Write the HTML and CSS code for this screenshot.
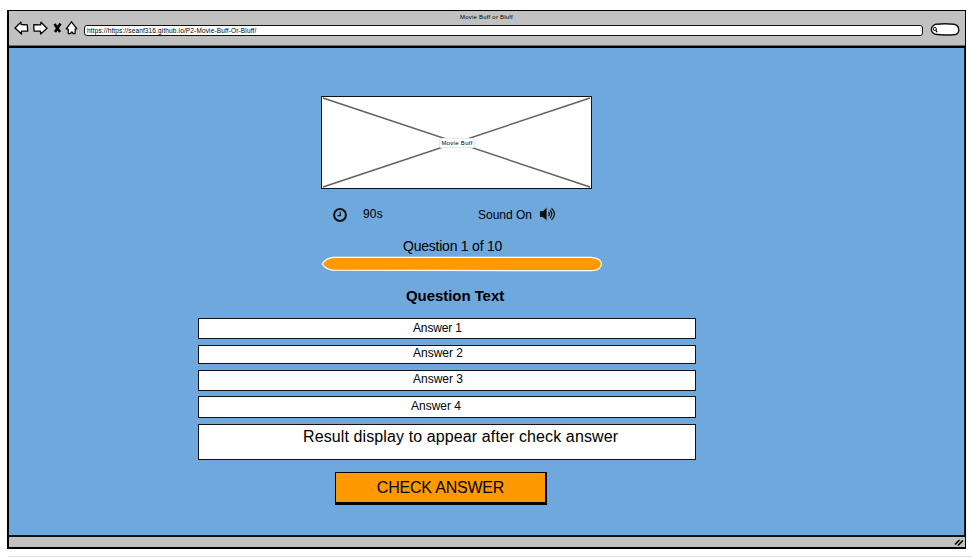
FILE: index.html
```html
<!DOCTYPE html>
<html lang="en">
<head>
<meta charset="utf-8">
<title>Movie Buff or Bluff</title>
<link rel="stylesheet" href="styles.css">
</head>
<body>
<div class="window">
  <header class="chrome">
    <div class="title"><span>Movie Buff or Bluff</span></div>
    <div class="toolbar">
      <svg class="nav" width="64" height="16" viewBox="0 0 64 16" fill="#fff" stroke="#000" stroke-width="1.3" stroke-linejoin="round">
        <path d="M1 8 6.800 2.200 7.200 4.500 13.300 4.800l.4 6.200-6.300.2.100 2.800Z"/>
        <path d="M33 8.300 27 2.300l-.4 2.500-6.800-.1.200 6.400 6.400.1.300 2.800Z"/>
        <path d="m40.500 4 5.500 8M46.500 3.500 41 12" fill="none" stroke-width="2.600"/>
        <path d="m57.500 1.800-5.300 7 2 .3.100 4.400 2.400.2.400-1.500 1.400 0 .4 1.500 2.200-.2.100-4.300 1.500-.5Z"/>
      </svg>
      <div class="url">https://https://seanf316.github.io/P2-Movie-Buff-Or-Bluff/</div>
      <svg class="search" width="30" height="13" viewBox="0 0 30 13" fill="#fff" stroke="#111" stroke-width="1.400">
        <path d="M6 1.200Q15 .3 24 1.200C30 2.300 30 10 25.500 11.500Q15 12.700 5 11.300C0 9 0 3.500 6 1.200Z"/>
        <circle cx="4.800" cy="6" r="1.600" stroke-width="1"/><path d="m6 7.200 1 2"/>
      </svg>
    </div>
  </header>
  <main class="page">
    <div class="hero">
      <svg width="271" height="93" viewBox="0 0 271 93" fill="none" stroke="#606060" stroke-width="1.500"><path d="M2 2 269 91M269 2 2 91"/></svg>
      <span class="hero-label">Movie Buff</span>
    </div>
    <div class="status">
      <svg class="clock" width="14" height="14" viewBox="0 0 14 14" fill="none" stroke="#111"><circle cx="7" cy="7" r="5.900" stroke-width="2"/><path d="M7.300 3.800V7.700H4.500" stroke-width="1.200"/></svg>
      <span class="time">90s</span>
      <span class="sound">Sound On</span>
      <svg class="speaker" width="16" height="14" viewBox="0 0 16 14" fill="none" stroke="#111" stroke-width="1.200"><path d="M.5 4.800h2.700L6 2v10L3.200 9.500H.5Z" fill="#111"/><path d="M8.500 5q2 2 0 4M10 3q3.600 4 0 8M11.500 1.200q6 5.800 0 11.600"/></svg>
    </div>
    <div class="count">Question 1 of 10</div>
    <svg class="progress" width="282" height="16" viewBox="0 0 282 16"><path d="M12 1.300H270Q280.500 2 280.500 8.300 279 14.500 271 14.700L12 14.200Q5 13.500 1.200 8 5 2 12 1.300Z" fill="#ff9900" stroke="#fff" stroke-width="1.200"/></svg>
    <h1 class="question">Question Text</h1>
    <div class="answers">
      <div class="answer a1">Answer 1</div>
      <div class="answer a2">Answer 2</div>
      <div class="answer a3">Answer 3</div>
      <div class="answer a4">Answer 4</div>
      <div class="answer result">Result display to appear after check answer</div>
    </div>
    <button class="check">CHECK ANSWER</button>
  </main>
  <footer class="statusbar">
    <svg width="10" height="9" viewBox="0 0 10 9" stroke="#000" stroke-width="1.600"><path d="M1 6.500 5.500 2M4 7.500 8.800 2.500"/></svg>
  </footer>
</div>
<div class="base-line"></div>
</body>
</html>
```
FILE: styles.css
```css
* { box-sizing: border-box; }
body { margin: 0; padding: 10px 0 0 7px; height: 557px; overflow: hidden; background: #fff; color: #000; font-family: "Liberation Sans", Arial, sans-serif; }
.window { width: 959px; height: 539px; border: 1px solid #000; border-width: 1px 1px 2px 2px; background: #c1c1c1; display: flex; flex-direction: column; }
.chrome { height: 37px; border-bottom: 2px solid #000; box-shadow: inset 0 -1px #666; }
.title { height: 13px; padding-left: 451px; font-size: 6px; line-height: 13px; letter-spacing: .22px; white-space: nowrap; }
.toolbar { display: flex; align-items: flex-start; height: 18px; padding-left: 5px; }
.nav { margin-top: -4px; }
.url { width: 839px; height: 11px; margin: 1px 0 0 6px; border: 1px solid #111; border-radius: 3px; background: #fff; padding-left: 2px; font-size: 6.500px; line-height: 9px; letter-spacing: .14px; white-space: nowrap; }
.search { margin: -1px 0 0 7px; }
.page { height: 487px; background: #6fa8dc; border-right: 1px solid #222; padding-top: 48px; }
.hero { position: relative; width: 271px; height: 93px; margin-left: 312px; border: 1px solid #111; background: #fff; }
.hero svg { display: block; margin: -1px; }
.hero-label { position: absolute; left: 117px; top: 41px; width: 36px; height: 10px; border: 1px solid #e8e8e8; border-radius: 2px; background: #fff; font-size: 6px; line-height: 8px; letter-spacing: .3px; text-align: center; white-space: nowrap; }
.status { display: flex; align-items: flex-start; height: 38px; margin-left: 324px; padding-top: 15px; font-size: 12px; line-height: 20px; white-space: nowrap; }
.clock { margin-top: 4px; }
.time { width: 115px; margin: 0 0 0 16px; letter-spacing: .2px; }
.sound { width: 61px; margin-top: 1px; }
.speaker { margin-top: 3px; margin-left: 1px; }
.count { height: 29px; margin-left: 394px; font-size: 14px; line-height: 38px; letter-spacing: -.23px; }
.progress { display: block; margin: 0 0 0 312px; }
.question { height: 46px; margin: 0 0 0 397px; font-size: 15px; line-height: 48px; letter-spacing: -.06px; }
.answers { display: flex; flex-direction: column; width: 498px; margin-left: 189px; }
.answer { border: 1px solid #111; background: #fff; font-size: 12px; line-height: 18px; padding-left: 214px; white-space: nowrap; }
.a1 { height: 21px; margin-bottom: 6px; letter-spacing: -.15px; }
.a2 { height: 19px; margin-bottom: 6px; line-height: 14px; }
.a3 { height: 21px; margin-bottom: 5px; line-height: 16px; }
.a4 { height: 22px; margin-bottom: 6px; padding-left: 212px; line-height: 18px; }
.result { height: 36px; padding-left: 104px; font-size: 16px; line-height: 24px; letter-spacing: .11px; }
.check { display: block; width: 212px; height: 33px; margin: 12px 0 0 326px; padding: 0; border: 1px solid #000; border-width: 1px 2px 3px 1px; background: #ff9900; color: #000; font: 16px/28px "Liberation Sans", Arial, sans-serif; letter-spacing: -.2px; white-space: nowrap; }
.statusbar { flex: 1; border-top: 2px solid #111; display: flex; justify-content: flex-end; padding: 1px 1px 0 0; }
.base-line { height: 1px; margin: 7px 0 0 1px; background: #e3e3e3; }
```
